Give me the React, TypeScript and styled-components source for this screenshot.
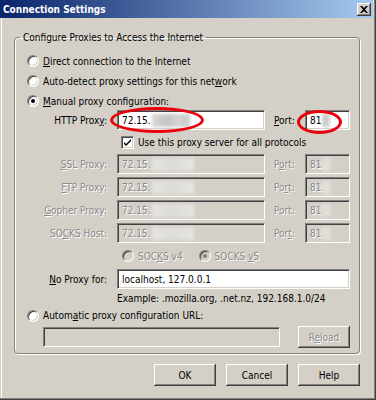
import React from "react";
import styled, { createGlobalStyle, css } from "styled-components";

const GlobalStyle = createGlobalStyle`
  html, body {
    margin: 0;
    padding: 0;
    background: #d4d0c8;
  }
  body {
    font-family: Tahoma, "DejaVu Sans Condensed", "Liberation Sans", sans-serif;
    font-size: 10px;
    color: #000;
  }
`;

const disabledText = css`
  color: #8a8a8a;
  text-shadow: 1px 1px 0 #fff;
`;

const Window = styled.div`
  position: relative;
  width: 376px;
  height: 400px;
  box-sizing: border-box;
  padding: 0 3px 3px 0;
  background: #d4d0c8;
  box-shadow: inset -1px -1px 0 #404040, inset -2px -2px 0 #808080,
    inset 1px 1px 0 #d4d0c8, inset 2px 2px 0 #fff;
  display: flex;
  flex-direction: column;
  overflow: hidden;
`;

const TitleBar = styled.div`
  height: 18px;
  display: flex;
  align-items: center;
  justify-content: space-between;
  padding: 0 2px 0 3px;
  background: linear-gradient(to right, #0a246a, #a6caf0);
`;

const Title = styled.span`
  color: #fff;
  font-weight: bold;
  font-size: 10px;
`;

const CloseButton = styled.div`
  width: 14px;
  height: 13px;
  box-sizing: border-box;
  background: #d4d0c8;
  display: flex;
  align-items: center;
  justify-content: center;
  box-shadow: inset -1px -1px 0 #404040, inset 1px 1px 0 #fff,
    inset -2px -2px 0 #808080;
`;

const Body = styled.div`
  flex: 1;
  display: flex;
  flex-direction: column;
  padding: 13px 13px 0 14px;
`;

const Group = styled.fieldset`
  margin: 0;
  min-width: 0;
  padding: 0 9px 5px 12px;
  border: 1px solid #808080;
  border-radius: 4px;
  box-shadow: 1px 1px 0 #fff, inset 1px 1px 0 #fff;
  display: flex;
  flex-direction: column;
`;

const Legend = styled.legend`
  margin-left: -7px;
  padding: 0 3px;
  line-height: 13px;
`;

const RadioRow = styled.label<{ $height?: number; $disabled?: boolean }>`
  height: ${(p) => p.$height ?? 20}px;
  display: flex;
  align-items: center;
  gap: 4px;
  white-space: nowrap;
  ${(p) => p.$disabled && disabledText}
`;

const Options = styled.div`
  margin-top: 7px;
  display: flex;
  flex-direction: column;
`;

const RadioCircle = styled.span<{ $checked?: boolean; $disabled?: boolean }>`
  position: relative;
  width: 12px;
  height: 12px;
  box-sizing: border-box;
  border-radius: 50%;
  border: 1px solid;
  border-color: #808080 #fff #fff #808080;
  background: ${(p) => (p.$disabled ? "#d4d0c8" : "#fff")};
  box-shadow: inset 1px 1px 0 #404040, inset -1px -1px 0 #d4d0c8;
  flex-shrink: 0;
  text-shadow: none;
  &::after {
    content: "";
    display: ${(p) => (p.$checked ? "block" : "none")};
    position: absolute;
    left: 3px;
    top: 3px;
    width: 4px;
    height: 4px;
    border-radius: 50%;
    background: ${(p) => (p.$disabled ? "#808080" : "#000")};
  }
`;

const ProxyGrid = styled.div`
  margin-top: -1px;
  display: grid;
  grid-template-columns: 90px 148px 40px 45px;
  grid-template-rows: 20px 18px 20px 20px 20px 20px 20px 20px 14px;
  row-gap: 3px;
  align-items: center;
`;

const FieldLabel = styled.span<{ $disabled?: boolean }>`
  text-align: right;
  padding-right: 10px;
  white-space: nowrap;
  ${(p) => p.$disabled && disabledText}
`;

const PortLabel = styled.span<{ $disabled?: boolean }>`
  padding-left: 9px;
  white-space: nowrap;
  ${(p) => p.$disabled && disabledText}
`;

const Field = styled.div<{ $disabled?: boolean; $span?: boolean }>`
  height: 20px;
  box-sizing: border-box;
  padding: 0 0 0 4px;
  display: flex;
  align-items: center;
  white-space: nowrap;
  overflow: hidden;
  background: ${(p) => (p.$disabled ? "#d4d0c8" : "#fff")};
  border: 1px solid;
  border-color: #808080 #fff #fff #808080;
  box-shadow: inset 1px 1px 0 #404040, inset -1px -1px 0 #d4d0c8;
  ${(p) => p.$disabled && disabledText}
  ${(p) => p.$span && "grid-column: 2 / 5;"}
`;

const Blur = styled.span<{ $w: number; $disabled?: boolean }>`
  display: inline-block;
  width: ${(p) => p.$w}px;
  height: 13px;
  margin-left: 1px;
  background: ${(p) =>
    p.$disabled
      ? "linear-gradient(to right, #e6e4e0, #dedcd8 50%, #e6e4e0)"
      : "linear-gradient(to right, #d8d8d8, #c4c4c4 40%, #d4d4d4 70%, #cccccc)"};
  filter: blur(1.5px);
`;

const CheckRow = styled.label`
  grid-column: 2 / 5;
  display: flex;
  align-items: center;
  gap: 4px;
  padding-left: 4px;
  white-space: nowrap;
`;

const CheckBox = styled.span`
  width: 13px;
  height: 13px;
  box-sizing: border-box;
  background: #fff;
  border: 1px solid;
  border-color: #808080 #fff #fff #808080;
  box-shadow: inset 1px 1px 0 #404040, inset -1px -1px 0 #d4d0c8;
  display: flex;
  align-items: center;
  justify-content: center;
`;

const SocksRow = styled.div`
  grid-column: 2 / 5;
  display: flex;
  align-items: center;
  gap: 16px;
  padding-left: 5px;
`;

const Example = styled.span`
  grid-column: 2 / 5;
  white-space: nowrap;
  line-height: 14px;
`;

const UrlRow = styled.div`
  margin-top: 1px;
  padding-left: 16px;
  display: flex;
  align-items: center;
  gap: 18px;
`;

const UrlField = styled(Field)`
  width: 237px;
`;

const Button = styled.button<{ $width?: number; $disabled?: boolean }>`
  width: ${(p) => p.$width ?? 62}px;
  height: 22px;
  padding: 0;
  font: inherit;
  color: #000;
  background: #d4d0c8;
  border: none;
  box-shadow: inset -1px -1px 0 #404040, inset 1px 1px 0 #fff,
    inset -2px -2px 0 #808080;
  ${(p) => p.$disabled && disabledText}
`;

const ButtonBar = styled.div`
  margin-top: 10px;
  display: flex;
  justify-content: flex-end;
  gap: 10px;
`;

const U = styled.span`
  text-decoration: underline;
`;

const Ellipse = styled.div<{ $x: number; $y: number; $w: number; $h: number }>`
  position: absolute;
  left: ${(p) => p.$x}px;
  top: ${(p) => p.$y}px;
  width: ${(p) => p.$w}px;
  height: ${(p) => p.$h}px;
  box-sizing: border-box;
  border: 3px solid #e8000b;
  border-radius: 50%;
  pointer-events: none;
`;

const CloseIcon = () => (
  <svg width="8" height="7" viewBox="0 0 8 7">
    <path d="M0 0h2l2 2 2-2h2L5 3.5 8 7H6L4 5 2 7H0l3-3.5z" fill="#000" />
  </svg>
);

const CheckIcon = () => (
  <svg width="9" height="9" viewBox="0 0 9 9">
    <path d="M1 4l2 2 5-5v2L3 8 1 6z" fill="#000" />
  </svg>
);

const proxies = [
  { label: <><U>S</U>SL Proxy:</>, port: <>P<U>o</U>rt:</> },
  { label: <><U>F</U>TP Proxy:</>, port: <>Po<U>r</U>t:</> },
  { label: <><U>G</U>opher Proxy:</>, port: <>Port:</> },
  { label: <>SO<U>C</U>KS Host:</>, port: <>Por<U>t</U>:</> },
];

export default function App() {
  return (
    <>
      <GlobalStyle />
      <Window>
        <TitleBar>
          <Title>Connection Settings</Title>
          <CloseButton>
            <CloseIcon />
          </CloseButton>
        </TitleBar>
        <Body>
          <Group>
            <Legend>Configure Proxies to Access the Internet</Legend>
            <Options>
              <RadioRow>
                <RadioCircle />
                <span><U>D</U>irect connection to the Internet</span>
              </RadioRow>
              <RadioRow>
                <RadioCircle />
                <span>Auto-detect proxy settings for this net<U>w</U>ork</span>
              </RadioRow>
              <RadioRow>
                <RadioCircle $checked />
                <span><U>M</U>anual proxy configuration:</span>
              </RadioRow>
            </Options>
            <ProxyGrid>
              <FieldLabel>HTTP Prox<U>y</U>:</FieldLabel>
              <Field>
                72.15.<Blur $w={38} />
              </Field>
              <PortLabel><U>P</U>ort:</PortLabel>
              <Field>
                81<Blur $w={8} />
              </Field>

              <CheckRow>
                <CheckBox>
                  <CheckIcon />
                </CheckBox>
                <span>Use this proxy server for all protocols</span>
              </CheckRow>

              {proxies.map((p, i) => (
                <React.Fragment key={i}>
                  <FieldLabel $disabled>{p.label}</FieldLabel>
                  <Field $disabled>
                    72.15.<Blur $w={42} $disabled />
                  </Field>
                  <PortLabel $disabled>{p.port}</PortLabel>
                  <Field $disabled>
                    81<Blur $w={8} $disabled />
                  </Field>
                </React.Fragment>
              ))}

              <SocksRow>
                <RadioRow $disabled>
                  <RadioCircle $disabled />
                  <span>SOC<U>K</U>S v4</span>
                </RadioRow>
                <RadioRow $disabled>
                  <RadioCircle $disabled $checked />
                  <span>SOCKS <U>v</U>5</span>
                </RadioRow>
              </SocksRow>

              <FieldLabel><U>N</U>o Proxy for:</FieldLabel>
              <Field $span>localhost, 127.0.0.1</Field>

              <Example>Example: .mozilla.org, .net.nz, 192.168.1.0/24</Example>
            </ProxyGrid>
            <RadioRow $height={19}>
              <RadioCircle />
              <span>Autom<U>a</U>tic proxy configuration URL:</span>
            </RadioRow>
            <UrlRow>
              <UrlField $disabled />
              <Button $width={52} $disabled>
                R<U>e</U>load
              </Button>
            </UrlRow>
          </Group>
          <ButtonBar>
            <Button>OK</Button>
            <Button>Cancel</Button>
            <Button>Help</Button>
          </ButtonBar>
        </Body>
        <Ellipse $x={110} $y={107} $w={94} $h={26} />
        <Ellipse $x={297} $y={110} $w={45} $h={24} />
      </Window>
    </>
  );
}
